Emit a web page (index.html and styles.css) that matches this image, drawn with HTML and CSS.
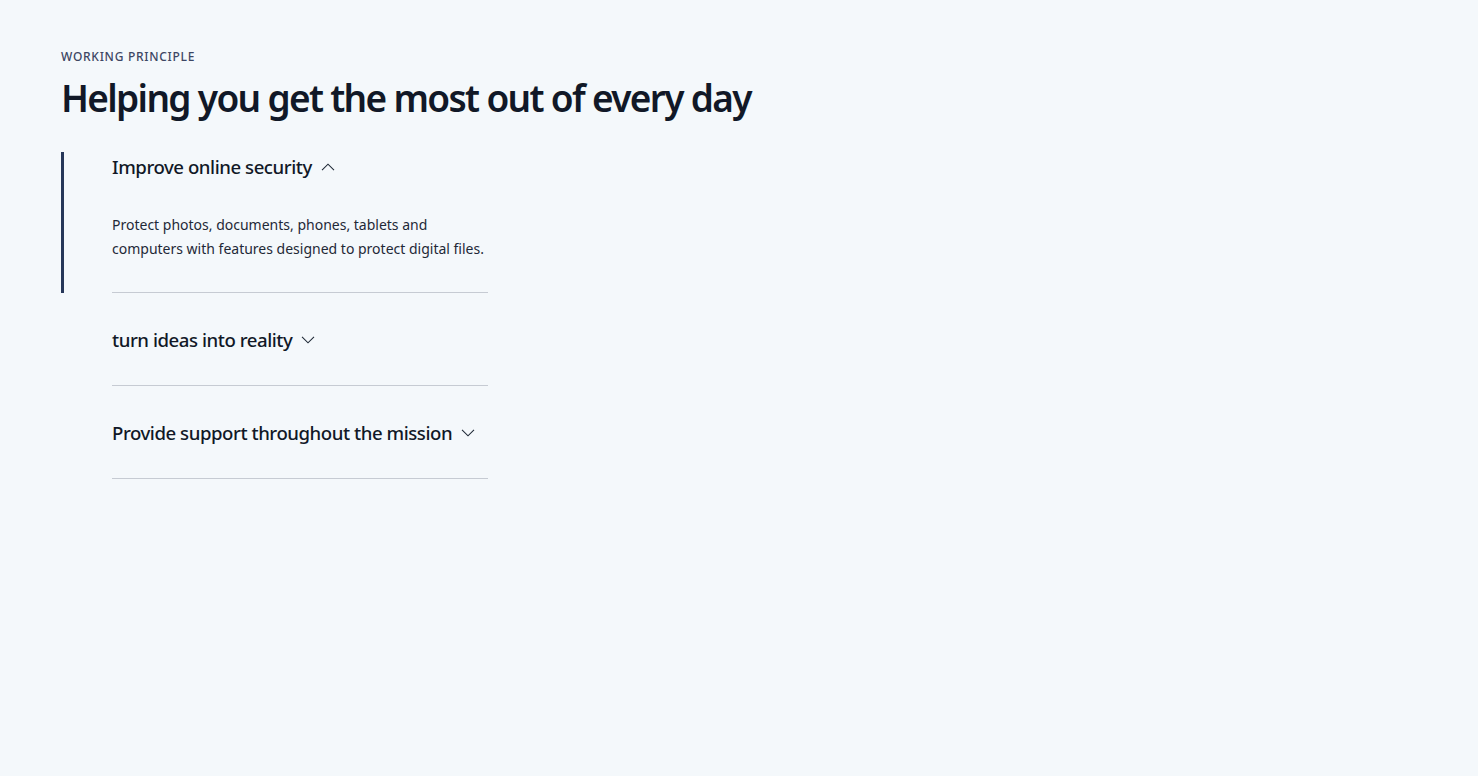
FILE: index.html
```html
<!DOCTYPE html>
<html lang="en">
<head>
<meta charset="utf-8">
<title>Working principle</title>
<link rel="stylesheet" href="styles.css">
</head>
<body>
<section class="principles">
  <p class="eyebrow">WORKING PRINCIPLE</p>
  <h1 class="heading">Helping you get the most out of every day</h1>
  <div class="accordion">
    <div class="item is-open">
      <div class="item-inner">
        <button class="item-title">
          <span>Improve online security</span>
          <svg class="chev" width="14" height="8" viewBox="0 0 14 8" fill="none"><path d="M1 7.2 7 1.2l6 6" stroke="#1f2937" stroke-width="1.1"/></svg>
        </button>
        <p class="item-body">Protect photos, documents, phones, tablets and computers with features designed to protect digital files.</p>
      </div>
    </div>
    <div class="item">
      <div class="item-inner">
        <button class="item-title">
          <span>turn ideas into reality</span>
          <svg class="chev" width="14" height="8" viewBox="0 0 14 8" fill="none"><path d="M1 .8l6 6 6-6" stroke="#1f2937" stroke-width="1.1"/></svg>
        </button>
      </div>
    </div>
    <div class="item">
      <div class="item-inner">
        <button class="item-title">
          <span>Provide support throughout the mission</span>
          <svg class="chev" width="14" height="8" viewBox="0 0 14 8" fill="none"><path d="M1 .8l6 6 6-6" stroke="#1f2937" stroke-width="1.1"/></svg>
        </button>
      </div>
    </div>
  </div>
</section>
</body>
</html>
```
FILE: styles.css
```css
* { box-sizing: border-box; }
html, body { margin: 0; padding: 0; }
body {
  background: #f4f8fb;
  color: #111827;
  font-family: "Noto Sans", "Open Sans", sans-serif;
  min-height: 776px;
}
.principles {
  padding: 49px 61px;
}
.eyebrow {
  margin: 0;
  font-size: 12px;
  line-height: 16px;
  letter-spacing: 0.06em;
  color: #3d4663;
  font-weight: 500;
}
.heading {
  margin: 7px 0 0;
  font-size: 37px;
  line-height: 52px;
  font-weight: 600;
  letter-spacing: -0.045em;
  color: #111827;
}
.accordion {
  margin-top: 28px;
  display: flex;
  flex-direction: column;
  gap: 32px;
}
.item {
  border-left: 3px solid transparent;
  padding-left: 48px;
}
.item.is-open {
  border-left-color: #263759;
}
.item-inner {
  width: 376px;
  border-bottom: 1px solid #c6cbd3;
  padding-bottom: 30px;
}
.is-open .item-inner { padding-bottom: 31px; }
.item-title {
  display: flex;
  align-items: center;
  gap: 9px;
  height: 30px;
  padding: 0 0 2px;
  border: 0;
  background: none;
  font-family: inherit;
  font-size: 18.6px;
  font-weight: 500;
  letter-spacing: -0.024em;
  color: #111827;
  cursor: pointer;
}
.chev { flex: none; margin-top: 1px; }
.item-body {
  margin: 31px 0 0;
  font-size: 14px;
  line-height: 24px;
  color: #1f2937;
  letter-spacing: 0;
}
```
